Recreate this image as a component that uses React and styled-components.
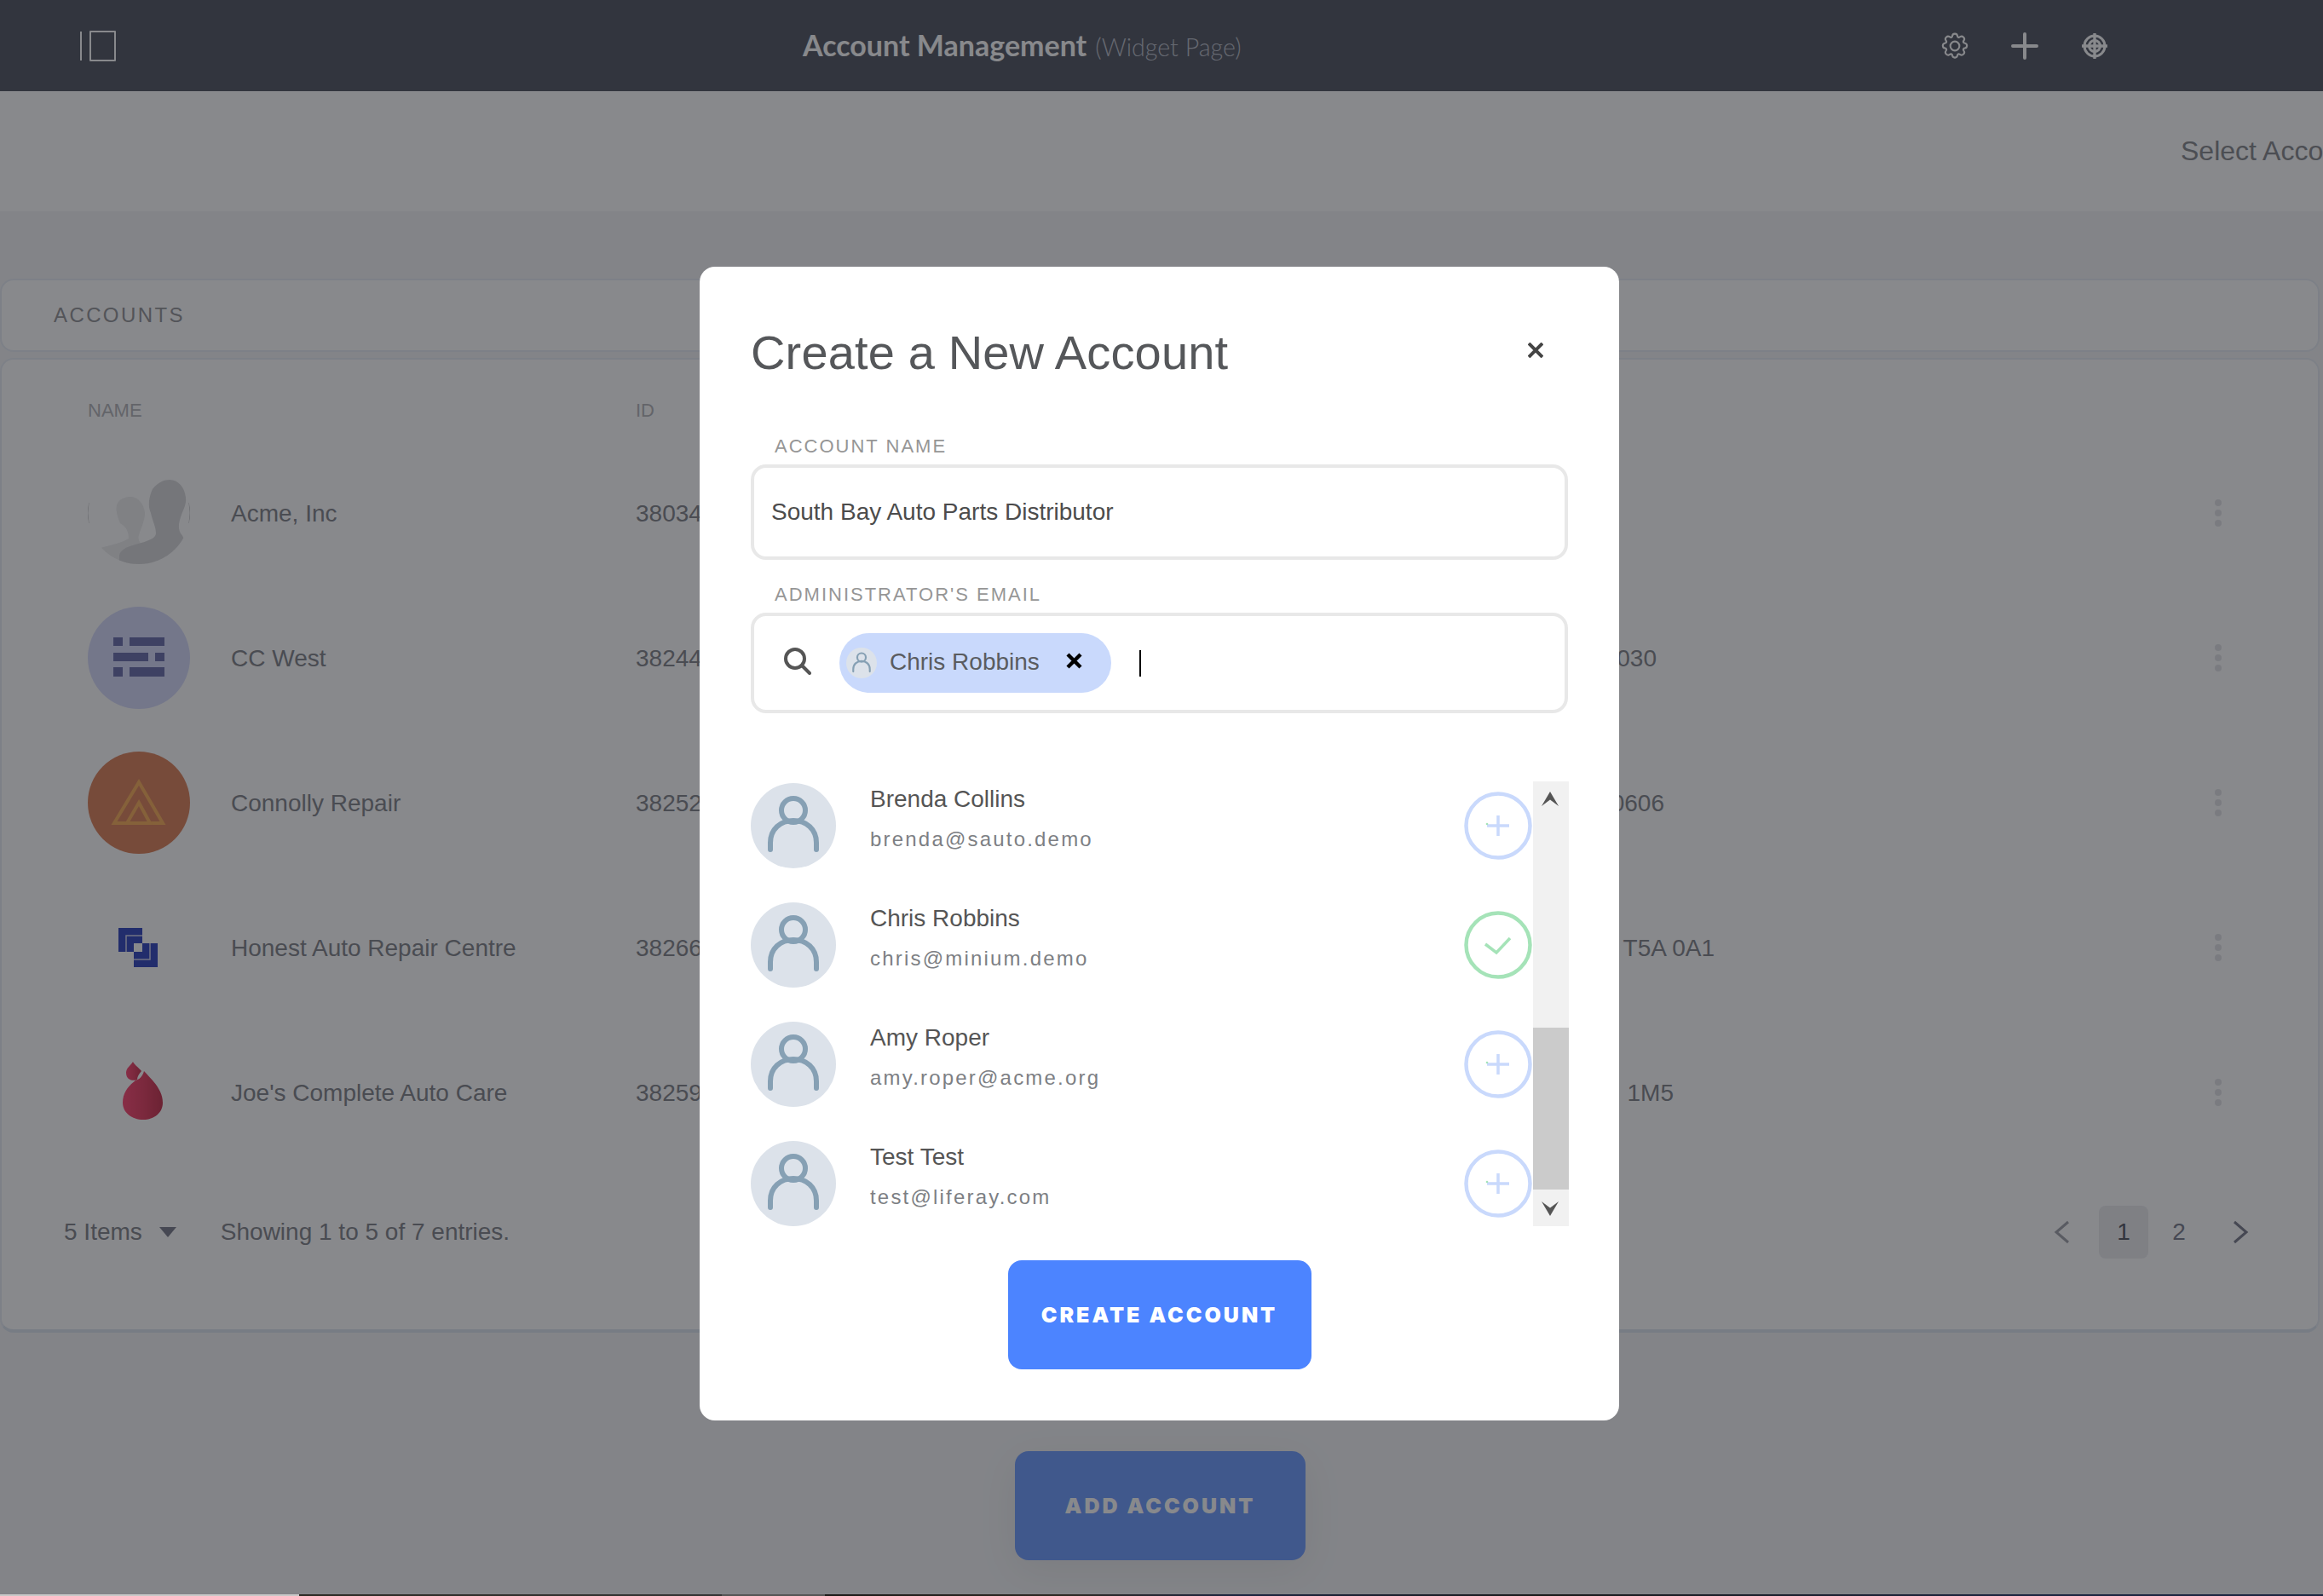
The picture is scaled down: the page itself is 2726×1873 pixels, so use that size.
import React from 'react'
import styled, { createGlobalStyle } from 'styled-components'

const GlobalStyle = createGlobalStyle`
  * { box-sizing: border-box; }
  html, body { margin: 0; padding: 0; background: #fff; overflow: hidden; }
  body { font-family: "Liberation Sans", Arial, sans-serif; }
`

const Stage = styled.div`
  position: relative;
  width: 2726px;
  height: 1871px;
  overflow: hidden;
`

const Page = styled.div`
  width: 2726px;
  height: 1871px;
  display: flex;
  flex-direction: column;
  background: #f2f3f5;
`

const TopNav = styled.header`
  height: 107px;
  flex: none;
  background: #2a2f3e;
  display: flex;
  align-items: center;
  padding-left: 94px;
  position: relative;
`

const SidebarToggle = styled.div`
  display: flex;
  gap: 9px;
  align-items: center;
  height: 36px;
`

const ToggleBar = styled.span`
  width: 2px;
  height: 34px;
  background: #fff;
`

const ToggleBox = styled.span`
  width: 31px;
  height: 36px;
  border: 2px solid #fff;
  border-radius: 1px;
`

const NavTitle = styled.div`
  margin: 0 0 2px 806px;
  font-family: Lato, "Open Sans", sans-serif;
  font-size: 34px;
  font-weight: 700;
  color: #fff;
  white-space: nowrap;

  span {
    font-weight: 300;
    font-size: 28.6px;
    color: #aab0bd;
    margin-left: 10px;
  }
`

const NavIcons = styled.div`
  margin-left: auto;
  margin-right: 252px;
  display: flex;
  align-items: center;
  gap: 50px;
`

const NavIcon = styled.svg`
  width: 32px;
  height: 32px;
  display: block;
  fill: none;
  stroke: #fff;
`

const SelectBand = styled.div`
  height: 141px;
  flex: none;
  background: #fff;
  display: flex;
  align-items: center;
  padding-left: 2559px;
  font-size: 32px;
  color: #6a6c72;
  white-space: nowrap;
`

const Content = styled.main`
  flex: 1;
  padding: 79px 4px 0 0;
`

const Panel = styled.section`
  background: #fff;
  border: 2px solid #e3e9f2;
  border-radius: 16px;
`

const PanelHead = styled(Panel)`
  height: 86px;
  display: flex;
  align-items: center;
  padding-left: 61px;
  font-size: 24px;
  letter-spacing: 2.4px;
  color: #7a7b80;
`

const PanelBody = styled(Panel)`
  margin-top: 7px;
  height: 1144px;
  border-bottom-width: 4px;
  border-color: #e3e9f2 #e3e9f2 #d5dfec;
  display: flex;
  flex-direction: column;
`

const TableHead = styled.div`
  height: 95px;
  flex: none;
  display: flex;
  align-items: flex-end;
  padding: 0 0 22px 101px;
  font-size: 22px;
  color: #a2a3a8;
`

const HeadName = styled.span`
  width: 643px;
`

const Row = styled.div`
  height: 170px;
  flex: none;
  display: flex;
  align-items: center;
  padding-left: 101px;
  font-size: 28px;
  color: #64666e;
`

const LogoBox = styled.div`
  width: 120px;
  height: 120px;
  flex: none;
  border-radius: 50%;
  overflow: hidden;
  background: ${p => p.$bg || 'transparent'};

  svg {
    width: 120px;
    height: 120px;
    display: block;
  }
`

const RowName = styled.div`
  margin-left: 48px;
  padding-top: 2px;
  width: 475px;
  white-space: nowrap;
`

const RowId = styled.div`
  padding-top: 2px;
  width: 150px;
`

const RowCode = styled.div`
  padding-top: 2px;
  width: ${p => p.$end - 896}px;
  text-align: right;
  white-space: nowrap;
`

const RowMenu = styled.div`
  position: absolute;
  left: 2599px;
  display: flex;
  flex-direction: column;
  gap: 4px;

  span {
    width: 8px;
    height: 8px;
    border-radius: 50%;
    background: #dcdde2;
  }
`

const TableFoot = styled.div`
  flex: 1;
  display: flex;
  align-items: center;
  padding: 0 0 36px 73px;
  font-size: 28px;
  color: #64666e;
  position: relative;
`

const Caret = styled.span`
  width: 0;
  height: 0;
  margin: 0 52px 0 20px;
  border-left: 10px solid transparent;
  border-right: 10px solid transparent;
  border-top: 12px solid #5b5d70;
`

const Pager = styled.nav`
  margin-left: auto;
  margin-right: 81px;
  display: flex;
  align-items: center;
  font-size: 28px;
`

const PageNum = styled.div`
  width: 58px;
  height: 62px;
  border-radius: 8px;
  display: flex;
  align-items: center;
  justify-content: center;
  margin-left: ${p => p.$ml}px;
  background: ${p => (p.$active ? '#e8e8ec' : 'transparent')};
  color: ${p => (p.$active ? '#2c2d3a' : '#5b5d70')};
`

const PagerArrow = styled.svg`
  width: 20px;
  height: 30px;
  fill: none;
  stroke: ${p => p.$color};
  stroke-width: 3;
  margin-left: ${p => p.$ml || 0}px;
  display: block;
`

const AddWrap = styled.div`
  margin-top: 139px;
  padding-left: 1191px;
`

const AddButton = styled.div`
  width: 341px;
  height: 128px;
  border-radius: 16px;
  background: #4c84ff;
  color: #fff;
  display: flex;
  align-items: center;
  justify-content: center;
  font-family: Inter, "Liberation Sans", sans-serif;
  font-weight: 900;
  font-size: 25px;
  letter-spacing: 3px;
  box-shadow: 0 12px 48px rgba(0, 0, 0, 0.08);
`

const Backdrop = styled.div`
  position: absolute;
  inset: 0;
  background: rgba(57, 58, 63, 0.6);
`

const Modal = styled.div`
  position: absolute;
  left: 821px;
  top: 313px;
  width: 1079px;
  height: 1354px;
  background: #fff;
  border-radius: 18px;
  padding: 69px 60px 60px 60px;
  display: flex;
  flex-direction: column;
`

const ModalHead = styled.div`
  display: flex;
  justify-content: space-between;
  align-items: flex-start;
  margin-bottom: 65px;
`

const ModalTitle = styled.h2`
  margin: 0;
  font-size: 56px;
  line-height: 64px;
  font-weight: 400;
  letter-spacing: 0.15px;
  color: #55575a;
`

const CloseIcon = styled.svg`
  width: 18px;
  height: 18px;
  margin: 20px 29px 0 0;
  stroke: #444;
  stroke-width: 4;
  display: block;
`

const FieldLabel = styled.label`
  display: block;
  margin: 0 0 8px 28px;
  font-size: 22px;
  line-height: 26px;
  letter-spacing: 2px;
  color: #969696;
`

const FieldBox = styled.div`
  width: 959px;
  height: ${p => p.$h}px;
  border: 4px solid #e8e8e8;
  border-radius: 18px;
  display: flex;
  align-items: center;
  padding-left: ${p => p.$pad}px;
  margin-bottom: ${p => p.$mb}px;
  font-size: 28px;
  color: #4c4c4c;
`

const SearchIcon = styled.svg`
  width: 33px;
  height: 33px;
  flex: none;
  fill: none;
  stroke: #555;
  stroke-width: 4;
  margin: 0 33px 6px 0;
`

const Chip = styled.div`
  height: 70px;
  width: 319px;
  flex: none;
  border-radius: 35px;
  background: #c9d9fc;
  display: flex;
  align-items: center;
  padding-left: 8px;
  color: #5a5c60;
`

const ChipName = styled.span`
  margin: 0 0 3px 15px;
  width: 207px;
`

const ChipClose = styled.svg`
  width: 19px;
  height: 19px;
  margin-bottom: 5px;
  stroke: #000;
  stroke-width: 4.4;
`

const Caretline = styled.span`
  width: 2px;
  height: 31px;
  margin-left: 33px;
  background: #000;
`

const PersonCircle = styled.div`
  width: ${p => p.$size}px;
  height: ${p => p.$size}px;
  flex: none;
  border-radius: 50%;
  background: #dce2ea;

  svg {
    width: 100%;
    height: 100%;
    display: block;
    fill: none;
    stroke: #86a0b4;
    stroke-width: 6;
    stroke-linecap: round;
  }
`

const ListWrap = styled.div`
  display: flex;
  width: 960px;
  height: 522px;
  margin-bottom: 40px;
`

const List = styled.div`
  flex: 1;
  padding: 2px 1px 0 0;
  display: flex;
  flex-direction: column;
  gap: 40px;
`

const Person = styled.div`
  height: 100px;
  display: flex;
  align-items: flex-start;
`

const PersonText = styled.div`
  margin-left: 40px;
  padding-top: 1px;
  flex: 1;
`

const PersonName = styled.div`
  font-size: 28px;
  line-height: 36px;
  color: #555;
  margin-bottom: 11px;
`

const PersonEmail = styled.div`
  font-size: 24px;
  line-height: 36px;
  letter-spacing: 2.2px;
  color: #7d7f84;
`

const ActionCircle = styled.svg`
  width: 80px;
  height: 80px;
  margin-top: 10px;
  flex: none;
  fill: none;
  stroke-width: 3.5;
`

const ScrollTrack = styled.div`
  width: 42px;
  flex: none;
  background: #f1f1f1;
  display: flex;
  flex-direction: column;
  align-items: center;
`

const ScrollArrow = styled.svg`
  width: 20px;
  height: 17px;
  fill: #555;
  margin: ${p => p.$mt}px 2px 0 0;
  display: block;
`

const ScrollThumb = styled.div`
  width: 42px;
  height: 190px;
  margin-top: 260px;
  background: #cbcbcb;
`

const CreateButton = styled.div`
  align-self: center;
  width: 356px;
  height: 128px;
  border-radius: 16px;
  background: #4c84ff;
  color: #fff;
  display: flex;
  align-items: center;
  justify-content: center;
  font-family: Inter, "Liberation Sans", sans-serif;
  font-weight: 900;
  font-size: 25px;
  letter-spacing: 3px;
`

const TaskStrip = styled.div`
  height: 2px;
  display: flex;
`

const TaskPart = styled.span`
  width: ${p => p.$w}px;
  flex: ${p => (p.$w ? 'none' : '1')};
  background: ${p => p.$bg};
`

const AcmeLogo = () => (
  <svg viewBox="0 0 120 120">
    <path d="M15 101 C26 98 40 95 48 90 C48 80 44 76 38 72 C33 60 32 52 36 47 C40 42 46 41 50 41 C58 41 66 48 67 60 C67 70 62 78 60 86 C58 90 62 96 64 100 L64 120 H15 Z" fill="#eaeaeb" />
    <path d="M37 120 V110 C38 104 44 100 56 97 C70 93 80 90 80 84 C80 76 76 70 74 60 C70 52 72 40 76 32 C82 24 90 21 96 21 C106 21 114 30 115 42 C116 50 112 56 110 62 C107 70 106 76 108 82 C110 86 113 88 113 92 L113 120 Z" fill="#d0d0d3" />
    <g fill="none" stroke="#a8a8ac" strokeWidth="1">
      <path d="M44 1 A60 60 0 0 1 76 1" />
      <path d="M1 48 A60 60 0 0 0 1 72" />
      <path d="M119 48 A60 60 0 0 1 119 72" />
      <path d="M44 119 A60 60 0 0 0 76 119" />
    </g>
  </svg>
)

const WestLogo = () => (
  <svg viewBox="0 0 120 120" fill="#464d98">
    <rect x="30" y="36" width="11" height="10" />
    <rect x="49" y="36" width="41" height="10" />
    <rect x="30" y="54" width="41" height="10" />
    <rect x="79" y="54" width="11" height="10" />
    <rect x="30" y="71" width="11" height="11" />
    <rect x="49" y="71" width="41" height="11" />
  </svg>
)

const ConnollyLogo = () => (
  <svg viewBox="0 0 120 120" fill="none" stroke="#f89b32" strokeWidth="4">
    <path d="M60 36 L88 84 H31 Z" />
    <path d="M60 60 L73 84 H46 Z" />
  </svg>
)

const HonestLogo = () => (
  <svg viewBox="0 0 120 120">
    <rect x="36" y="37" width="28" height="28" fill="#001bb0" />
    <rect x="54" y="55" width="28" height="28" fill="#001bb0" />
    <rect x="54" y="55" width="10" height="10" fill="#ffffff" />
    <path d="M45 65 V46 H64" fill="none" stroke="#c5c8e8" strokeWidth="1.5" />
    <path d="M54 74 H73 V55" fill="none" stroke="#c5c8e8" strokeWidth="1.5" />
  </svg>
)

const DropLogo = () => (
  <svg viewBox="0 0 120 120">
    <defs>
      <linearGradient id="dropFill" x1="0" x2="1" y1="0" y2="0">
        <stop offset="0" stopColor="#ff1c52" />
        <stop offset="0.5" stopColor="#e0103c" />
        <stop offset="1" stopColor="#b80022" />
      </linearGradient>
    </defs>
    <path d="M53 24 C55 28 60 31 63 35 C60 38 58 42 58 45 C54 47 45 46 45 37 C45 31 50 29 53 24 Z" fill="url(#dropFill)" />
    <path d="M66 35 C74 44 88 56 88 72 C88 84 78 92 65 92 C52 92 41 84 41 72 C41 60 48 52 56 46 C60 45 64 42 66 35 Z" fill="url(#dropFill)" />
  </svg>
)

const companies = [
  { name: 'Acme, Inc', id: '38034', Logo: AcmeLogo },
  { name: 'CC West', id: '38244', code: '90030', end: 1944, bg: '#cdd2fa', Logo: WestLogo },
  { name: 'Connolly Repair', id: '38252', code: '60606', end: 1953, bg: '#d46434', Logo: ConnollyLogo },
  { name: 'Honest Auto Repair Centre', id: '38266', code: 'T5A 0A1', end: 2012, Logo: HonestLogo },
  { name: "Joe's Complete Auto Care", id: '38259', code: '1M5', end: 1964, Logo: DropLogo },
]

const people = [
  { name: 'Brenda Collins', email: 'brenda@sauto.demo' },
  { name: 'Chris Robbins', email: 'chris@minium.demo', picked: true },
  { name: 'Amy Roper', email: 'amy.roper@acme.org' },
  { name: 'Test Test', email: 'test@liferay.com' },
]

const PersonGlyph = () => (
  <svg viewBox="0 0 100 100">
    <circle cx="50" cy="32" r="14" />
    <path d="M23 78 V70 C23 54 35 44 50 44 C65 44 77 54 77 70 V78" />
  </svg>
)

const PersonAction = ({ picked }) =>
  picked ? (
    <ActionCircle viewBox="0 0 80 80" stroke="#a5e3b8">
      <circle cx="40" cy="40" r="37.5" strokeWidth="4.5" />
      <path d="M25 39 L38 49 L54 32" />
    </ActionCircle>
  ) : (
    <ActionCircle viewBox="0 0 80 80" stroke="#c9d9fc">
      <circle cx="40" cy="40" r="37.5" strokeWidth="4.5" />
      <path d="M27 40 H53 M40 28 V52" />
      <circle cx="27" cy="38" r="1.3" fill="#a5e3b8" stroke="none" />
    </ActionCircle>
  )

const App = () => (
  <>
    <GlobalStyle />
    <Stage>
      <Page>
        <TopNav>
          <SidebarToggle>
            <ToggleBar />
            <ToggleBox />
          </SidebarToggle>
          <NavTitle>
            Account Management<span>(Widget Page)</span>
          </NavTitle>
          <NavIcons>
            <NavIcon viewBox="0 0 24 24" strokeWidth="1.6" strokeLinejoin="round">
              <path d="M12.2 1.2a2.2 2.2 0 0 1 2 1.7l.1.5a1.2 1.2 0 0 0 1.8.8l.5-.3a2.2 2.2 0 0 1 2.9 .3l.1.1a2.2 2.2 0 0 1 .3 2.8l-.3.5a1.2 1.2 0 0 0 .8 1.8l.5.1a2.2 2.2 0 0 1 1.7 2v.4a2.2 2.2 0 0 1-1.7 2l-.5.1a1.2 1.2 0 0 0-.8 1.8l.3.5a2.2 2.2 0 0 1-.3 2.8l-.1.1a2.2 2.2 0 0 1-2.9.3l-.5-.3a1.2 1.2 0 0 0-1.8.8l-.1.5a2.2 2.2 0 0 1-2 1.7h-.4a2.2 2.2 0 0 1-2-1.7l-.1-.5a1.2 1.2 0 0 0-1.8-.8l-.5.3a2.2 2.2 0 0 1-2.9-.3l-.1-.1a2.2 2.2 0 0 1-.3-2.8l.3-.5a1.2 1.2 0 0 0-.8-1.8l-.5-.1a2.2 2.2 0 0 1-1.7-2v-.4a2.2 2.2 0 0 1 1.7-2l.5-.1a1.2 1.2 0 0 0 .8-1.8l-.3-.5a2.2 2.2 0 0 1 .3-2.8l.1-.1a2.2 2.2 0 0 1 2.9-.3l.5.3a1.2 1.2 0 0 0 1.8-.8l.1-.5a2.2 2.2 0 0 1 2-1.7z" />
              <circle cx="12" cy="12" r="4" />
            </NavIcon>
            <NavIcon viewBox="0 0 32 32" strokeWidth="4" strokeLinecap="round">
              <path d="M2 16 H30 M16 2 V30" />
            </NavIcon>
            <NavIcon viewBox="0 0 32 32" strokeWidth="3">
              <circle cx="16" cy="16" r="12" />
              <circle cx="16" cy="16" r="6.5" />
              <path d="M1 16 H31 M16 1 V31" strokeWidth="3.4" />
            </NavIcon>
          </NavIcons>
        </TopNav>
        <SelectBand>Select Account</SelectBand>
        <Content>
          <PanelHead>ACCOUNTS</PanelHead>
          <PanelBody>
            <TableHead>
              <HeadName>NAME</HeadName>
              <span>ID</span>
            </TableHead>
            {companies.map(({ name, id, code, end, bg, Logo }) => (
              <Row key={id}>
                <LogoBox $bg={bg}>
                  <Logo />
                </LogoBox>
                <RowName>{name}</RowName>
                <RowId>{id}</RowId>
                {code && <RowCode $end={end}>{code}</RowCode>}
                <RowMenu>
                  <span />
                  <span />
                  <span />
                </RowMenu>
              </Row>
            ))}
            <TableFoot>
              <span>5 Items</span>
              <Caret />
              <span>Showing 1 to 5 of 7 entries.</span>
              <Pager>
                <PagerArrow viewBox="0 0 20 30" $color="#8a8c96">
                  <path d="M17 3 L3 15 L17 27" />
                </PagerArrow>
                <PageNum $active $ml={33}>1</PageNum>
                <PageNum $ml={7}>2</PageNum>
                <PagerArrow viewBox="0 0 20 30" $color="#5b5d70" $ml={33}>
                  <path d="M3 3 L17 15 L3 27" />
                </PagerArrow>
              </Pager>
            </TableFoot>
          </PanelBody>
          <AddWrap>
            <AddButton>ADD ACCOUNT</AddButton>
          </AddWrap>
        </Content>
      </Page>
      <Backdrop />
      <Modal>
        <ModalHead>
          <ModalTitle>Create a New Account</ModalTitle>
          <CloseIcon viewBox="0 0 18 18">
            <path d="M1 1 L17 17 M17 1 L1 17" />
          </CloseIcon>
        </ModalHead>
        <FieldLabel>ACCOUNT NAME</FieldLabel>
        <FieldBox $h={112} $pad={20} $mb={28}>South Bay Auto Parts Distributor</FieldBox>
        <FieldLabel>ADMINISTRATOR'S EMAIL</FieldLabel>
        <FieldBox $h={118} $pad={34} $mb={80}>
          <SearchIcon viewBox="0 0 33 33">
            <circle cx="14" cy="14" r="11" />
            <path d="M22 22 L31 31" strokeLinecap="round" />
          </SearchIcon>
          <Chip>
            <PersonCircle $size={36}>
              <PersonGlyph />
            </PersonCircle>
            <ChipName>Chris Robbins</ChipName>
            <ChipClose viewBox="0 0 19 19">
              <path d="M2 2 L17 17 M17 2 L2 17" />
            </ChipClose>
          </Chip>
          <Caretline />
        </FieldBox>
        <ListWrap>
          <List>
            {people.map(person => (
              <Person key={person.email}>
                <PersonCircle $size={100}>
                  <PersonGlyph />
                </PersonCircle>
                <PersonText>
                  <PersonName>{person.name}</PersonName>
                  <PersonEmail>{person.email}</PersonEmail>
                </PersonText>
                <PersonAction picked={person.picked} />
              </Person>
            ))}
          </List>
          <ScrollTrack>
            <ScrollArrow viewBox="0 0 19 16" $mt={12}>
              <path d="M9.5 0 L19 16 L9.5 9 L0 16 Z" />
            </ScrollArrow>
            <ScrollThumb />
            <ScrollArrow viewBox="0 0 19 16" $mt={14}>
              <path d="M0 0 L9.5 7 L19 0 L9.5 16 Z" />
            </ScrollArrow>
          </ScrollTrack>
        </ListWrap>
        <CreateButton>CREATE ACCOUNT</CreateButton>
      </Modal>
    </Stage>
    <TaskStrip>
      <TaskPart $w={351} $bg="#c8c8c8" />
      <TaskPart $w={496} $bg="linear-gradient(90deg, #2c2a24, #343434)" />
      <TaskPart $w={121} $bg="#555" />
      <TaskPart $bg="linear-gradient(90deg, #1c1a18, #2d2823 16%, #1c2440 28%, #1a1a1a 48%, #1c2440 80%)" />
    </TaskStrip>
  </>
)

export default App
